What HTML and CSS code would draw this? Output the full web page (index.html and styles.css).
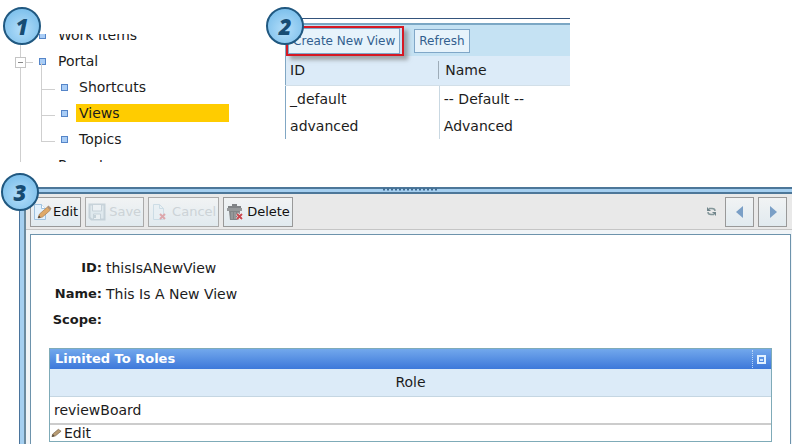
FILE: index.html
```html
<!DOCTYPE html>
<html lang="en">
<head>
<meta charset="utf-8">
<title>Create a view</title>
<link rel="stylesheet" href="styles.css">
</head>
<body>
<div class="top">
  <section class="step step-tree">
    <span class="badge">1</span>
    <nav class="tree">
      <ul>
        <li><a href="#"><i class="dot"></i><span>Work Items</span></a></li>
        <li class="open"><button class="toggle" aria-label="Collapse Portal"></button><a href="#"><i class="dot"></i><span>Portal</span></a>
          <ul class="sub">
            <li><a href="#"><i class="dot"></i><span>Shortcuts</span></a></li>
            <li><a href="#" class="selected"><i class="dot"></i><span>Views</span></a></li>
            <li><a href="#"><i class="dot"></i><span>Topics</span></a></li>
          </ul>
        </li>
        <li><a href="#"><span class="no-dot">Reports</span></a></li>
      </ul>
    </nav>
  </section>
  <section class="step step-list">
    <span class="badge">2</span>
    <div class="list">
      <div class="list-bar">
        <span class="marked"><button class="flat">Create New View</button></span>
        <button class="flat">Refresh</button>
      </div>
      <table class="views">
        <thead><tr><th>ID</th><th><span>Name</span></th></tr></thead>
        <tbody>
          <tr><td>_default</td><td>-- Default --</td></tr>
          <tr><td>advanced</td><td>Advanced</td></tr>
        </tbody>
      </table>
    </div>
  </section>
</div>
<section class="step step-detail">
  <span class="badge">3</span>
  <div class="splitter"><svg width="58" height="5" viewBox="0 0 58 5"><path d="M1 1.500H57" stroke="#3f6a91" stroke-width="2" stroke-dasharray="2 2"/></svg></div>
  <div class="frame">
    <div class="pane">
    <div class="toolbar">
      <button class="tool"><svg width="20" height="18" viewBox="0 0 20 18"><path d="M1.500 1.500h7l4 4v11h-11z" fill="#e2f1fc" stroke="#9fc2df"/><path d="M8.500 1.500v4h4" fill="#fff" stroke="#9fc2df"/><path d="M5 15l1.500-4 8-7 3 3-8 7z" fill="#dfa967" stroke="#a97b4b" stroke-width=".7"/><path d="M5 15l1-2.500 1.700 2z" fill="#413b35"/><path d="M14 4l3 3 1.500-1.500-3-3z" fill="#a9907a"/></svg>Edit</button>
      <button class="tool" disabled><svg width="18" height="18" viewBox="0 0 18 18"><path d="M1.500 1.500h15v15h-13l-2-2z" fill="#dce7ed" stroke="#b8c7d0" stroke-width="2"/><path d="M4.500 2v6h9V2M5.500 16v-5h7v5" fill="#edf2f5" stroke="#b8c7d0"/><path d="M7 12v3" stroke="#b8c7d0" stroke-width="2"/></svg>Save</button>
      <button class="tool" disabled><svg width="18" height="18" viewBox="0 0 18 18"><path d="M2.500 1.500h6l4 4v11h-10z" fill="#e8f0f5" stroke="#c0d5e1"/><path d="M8.500 1.500v4h4" fill="none" stroke="#c0d5e1"/><path d="M9 11l5 5M14 11l-5 5" stroke="#d98a90" stroke-width="2"/></svg>Cancel</button>
      <button class="tool"><svg width="18" height="18" viewBox="0 0 18 18"><path d="M2 5V3h4V1h5v2h4v2z" fill="#808386"/><path d="M1 5h15v3H1z" fill="#96999b"/><path d="M3 8h11l-1 9H4z" fill="#828587"/><path d="M6 9v7M9 9v7M12 9v4" stroke="#a9abac"/><path d="M11 11l5 5M16 11l-5 5" stroke="#fff" stroke-width="3"/><path d="M11 11l5 5M16 11l-5 5" stroke="#c94850" stroke-width="2"/></svg>Delete</button>
      <span class="spring"></span>
      <a href="#" class="reload" aria-label="Reload"><svg width="11" height="11" viewBox="0 0 11 11"><path d="M3 2.500h3q3 0 3 2.500M8 8.500H5Q2 8.500 2 6" fill="none" stroke="#84979a" stroke-width="1.500"/><path d="M1 1v4h4zM10 10V6H6z" fill="#71858b"/></svg></a>
      <button class="tool nav" aria-label="Previous"><svg width="8" height="12" viewBox="0 0 8 12"><path d="M7 0v12L0 6z" fill="#7a9fc6"/></svg></button>
      <button class="tool nav" aria-label="Next"><svg width="8" height="12" viewBox="0 0 8 12"><path d="M1 0v12l7-6z" fill="#7a9fc6"/></svg></button>
    </div>
    <div class="content">
      <dl class="fields">
        <dt>ID:</dt><dd>thisIsANewView</dd>
        <dt>Name:</dt><dd>This Is A New View</dd>
        <dt>Scope:</dt><dd></dd>
      </dl>
      <div class="roles">
        <h2>Limited To Roles <button class="fold" aria-label="Collapse"><svg width="9" height="9" viewBox="0 0 9 9"><path d="M1 1h7v7H1z" fill="none" stroke="#e2f1ff" stroke-width="2"/><path d="M3 4h3v2H3z" fill="#c9e1fb"/></svg></button></h2>
        <table>
          <thead><tr><th>Role</th></tr></thead>
          <tbody><tr><td>reviewBoard</td></tr></tbody>
        </table>
        <a href="#" class="edit"><svg width="11" height="10" viewBox="0 0 12 10"><path d="M1 9l1-3 6-5 3 2-6 5z" fill="#b99c73" stroke="#75614a" stroke-width=".7"/><path d="M1 9l1-3 2 2.500z" fill="#57493a"/></svg>Edit</a>
      </div>
    </div>
    </div>
  </div>
</section>
</body>
</html>
```
FILE: styles.css
```css
* { box-sizing: border-box; }
body {
  margin: 0;
  min-height: 100vh;
  display: flex;
  flex-direction: column;
  overflow: hidden;
  background: #fff;
  color: #1c1c1c;
  font: 14px/26px "DejaVu Sans", Verdana, sans-serif;
}
a { color: inherit; text-decoration: none; }
ul, dl, dd, h2 { margin: 0; padding: 0; list-style: none; }
button { font: inherit; color: inherit; padding: 0; }
svg { display: block; flex: none; }
.step { position: relative; }
.badge {
  position: absolute;
  z-index: 2;
  width: 38px;
  height: 38px;
  border: 2px solid #205880;
  border-radius: 50%;
  background: radial-gradient(circle at 50% 60%, #b4defa, #7fc1ec 75%);
  color: #174c73;
  font: italic 800 22px/34px "Open Sans", sans-serif;
  text-align: center;
}
.top { display: flex; align-items: flex-start; height: 187px; }
.step-tree { width: 36%; padding: 34px 0 0 15px; }
.step-tree .badge { left: 3px; top: 7px; }
.tree { height: 128px; overflow: hidden; }
.tree > ul {
  position: relative;
  margin-top: -12px;
}
.tree > ul::before {
  content: "";
  position: absolute;
  left: 5px;
  top: 0;
  height: 100%;
  border-left: 1px solid #cfcfcf;
}
.tree li { position: relative; }
.tree a { display: flex; align-items: center; height: 26px; padding-left: 24px; }
.tree a span { margin-left: 9px; padding: 0 3px; line-height: 18px; }
.tree .no-dot { margin-left: 16px; }
.dot { width: 7px; height: 7px; border: 1px solid #5585c8; background: #a9cdf6; }
.toggle {
  position: absolute;
  left: 0;
  top: 9px;
  width: 11px;
  height: 11px;
  border: 1px solid #c4c4c4;
  background: linear-gradient(#888, #888) center / 5px 1px no-repeat #fff;
}
.open::before {
  content: "";
  position: absolute;
  left: 11px;
  top: 14px;
  width: 7px;
  border-top: 1px solid #cfcfcf;
}
.tree .sub { margin-left: 26px; }
.tree .sub a { padding-left: 20px; }
.sub li::before {
  content: "";
  position: absolute;
  left: 0;
  top: -11px;
  width: 13px;
  height: 26px;
  border: solid #cfcfcf;
  border-width: 0 0 1px 1px;
}
.tree .sub a span { margin-left: 8px; }
.tree .sub .selected span { width: 153px; background: #fc0; }

.step-list { width: 36%; padding-top: 18px; }
.step-list .badge { left: -19px; top: 7px; }
.list {
  border-top: 1px solid #34547c;
  padding-top: 4px;
}
.list-bar {
  display: flex;
  align-items: center;
  gap: 10px;
  height: 33px;
  border-top: 2px solid #7ba7c4;
  border-left: 1px solid #81a7c4;
  background: #c5e2f3;
  color: #335f8f;
  font-size: 12px;
}
.marked { border: 2px solid #d61924; padding-right: 2px; box-shadow: 4px 4px 4px #7779; }
.flat {
  display: block;
  height: 24px;
  padding: 0 4px;
  line-height: 22px;
  border: 1px solid #80a7c8;
  background: #e7f3fb;
  white-space: nowrap;
}
.marked .flat { height: 26px; }
.views { width: 100%; border-collapse: collapse; table-layout: fixed; border-left: 1px solid #81a7c4; }
.views th, .views td { height: 27px; padding: 0 4px; text-align: left; font-weight: normal; }
.views th { height: 29px; background: #dcebf8; border-bottom: 1px solid #d2dfe8; }
.views th:first-child { width: 54%; }
.views th span { display: block; margin-left: -5px; padding-left: 6px; border-left: 1px solid #9eacb8; line-height: 18px; }
.views td + td { border-left: 1px solid #c9d8e2; }

.step-detail { flex: 1; display: flex; flex-direction: column; margin-left: 19px; }
.step-detail .badge { left: -18px; top: -14px; }
.splitter {
  display: flex;
  justify-content: center;
  align-items: center;
  height: 7px;
  padding-left: 10px;
  border: solid #4d7799;
  border-width: 2px 0;
  border-left-width: 1px;
  background: #a5cff0;
}
.frame {
  flex: 1;
  display: flex;
  flex-direction: column;
  padding-left: 4px;
  border-left: 1px solid #4a749c;
  background: #a5cff0;
}
.pane {
  flex: 1;
  display: flex;
  flex-direction: column;
  border-left: 2px solid #6a8a9f;
  background: #f0f4f7;
}
.toolbar {
  display: flex;
  align-items: center;
  gap: 4px;
  height: 36px;
  padding: 0 5px 0 4px;
  border-bottom: 1px solid #c5c5c5;
  background: #e9e9e9;
}
.tool {
  display: flex;
  align-items: center;
  gap: 4px;
  height: 30px;
  padding: 0 2px;
  border: 1px solid #999;
  background: linear-gradient(#f1f3f4, #e1eaef);
  color: #111;
  font-size: 12px;
}
.tool:not(.nav) { font-size: 13px; gap: 3px; }
.tool:first-child { gap: 0; }
.tool:disabled { border-color: #aaa; color: #ccd3d7; }
.tool:disabled svg { opacity: .7; }
.tool.nav { width: 29px; padding: 0; justify-content: center; }
.spring { flex: 1; }
.reload { margin-right: 4px; }
.content {
  flex: 1;
  margin: 4px 1px 0 4px;
  padding: 20px 18px 2px;
  border: solid #6d93ac;
  border-width: 1px 1px 0;
  background: #fff;
}
.fields { display: grid; grid-template-columns: 53px 1fr; column-gap: 4px; grid-auto-rows: 26px; }
.fields dt { display: flex; justify-content: flex-end; font-weight: bold; font-size: 13px; }
.roles { margin-top: 15px; border: 1px solid #7fabb8; }
.roles h2 {
  display: flex;
  align-items: center;
  justify-content: space-between;
  height: 20px;
  padding: 0 5px;
  background: linear-gradient(#72a8ec, #3d78da);
  color: #fff;
  font-size: 13px;
}
.fold { height: 18px; padding: 0 0 0 4px; border: 0; border-left: 1px dotted #b9d5f6; background: none; }
.roles table { width: 100%; border-collapse: collapse; }
.roles th { height: 27px; padding: 0; background: #dcebf8; border-bottom: 1px solid #c5d6e2; font-weight: normal; }
.roles td { height: 27px; padding: 0 4px; border-bottom: 2px solid #ccc; }
.edit { display: flex; align-items: center; gap: 2px; height: 16px; padding-left: 1px; }
```
